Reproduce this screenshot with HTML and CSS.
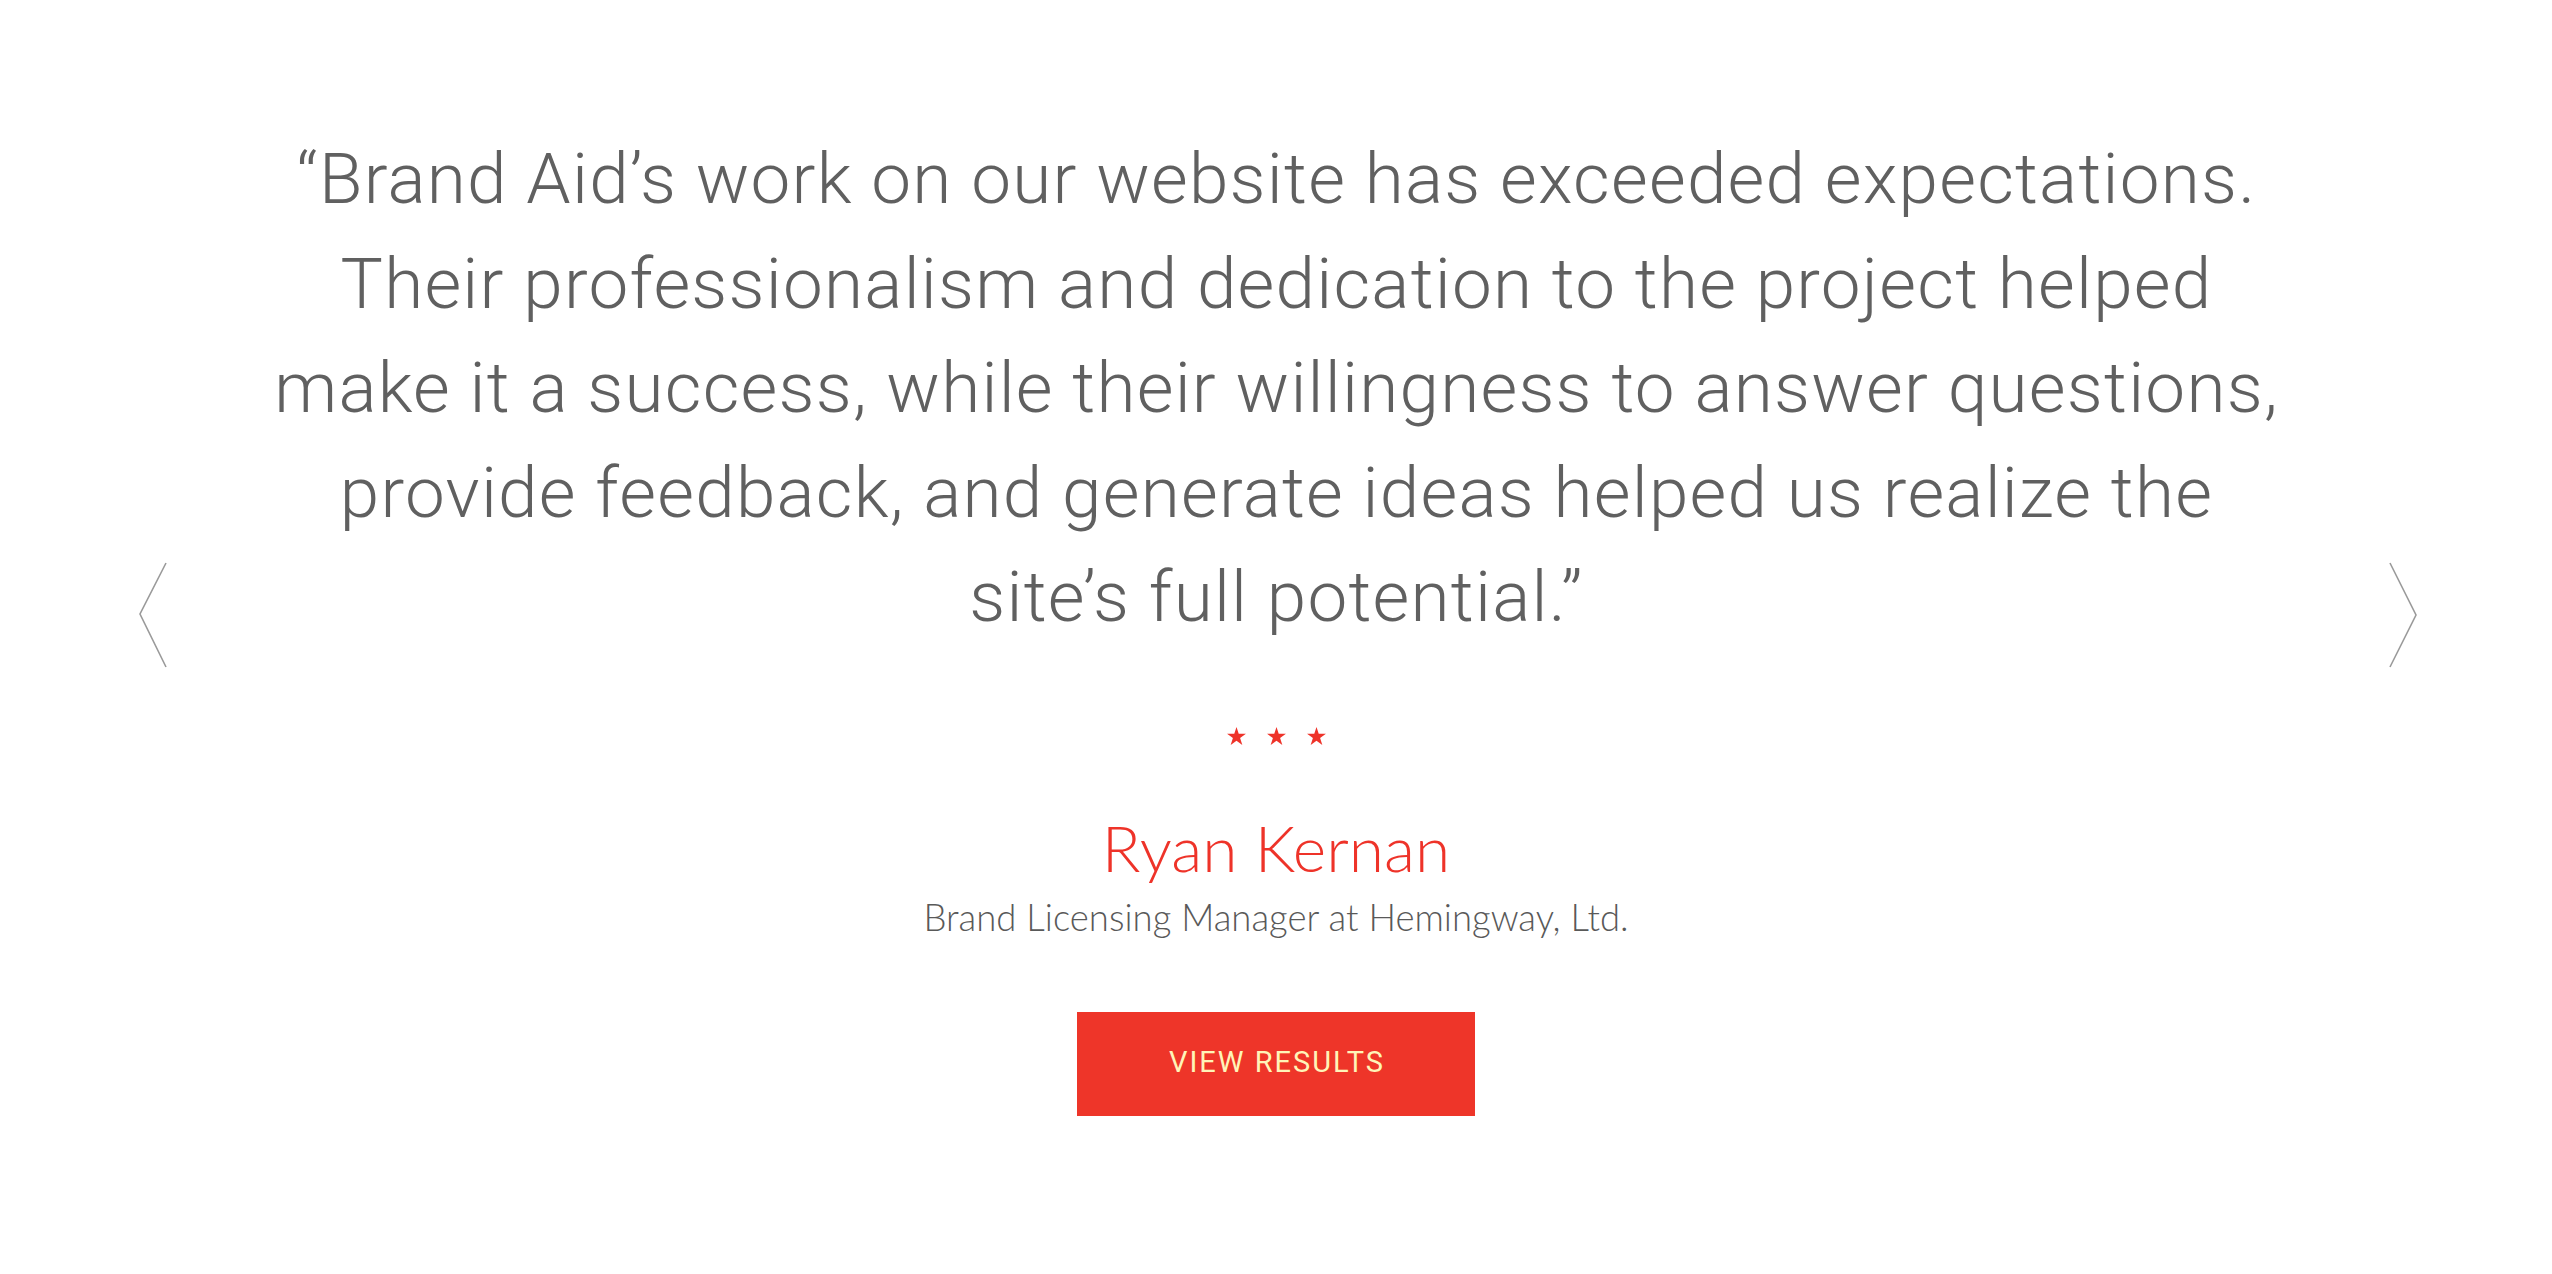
FILE: index.html
```html
<!DOCTYPE html>
<html lang="en">
<head>
<meta charset="utf-8">
<title>Testimonial</title>
<link rel="stylesheet" href="styles.css">
</head>
<body>
<section class="testimonial">
  <button class="nav nav-prev" aria-label="Previous">
    <svg width="30" height="106" viewBox="0 0 30 106"><polyline points="27,1 1,52 27,105" fill="none" stroke="#9a9a9a" stroke-width="1.6"/></svg>
  </button>
  <button class="nav nav-next" aria-label="Next">
    <svg width="30" height="106" viewBox="0 0 30 106"><polyline points="1,1 27,53 1,105" fill="none" stroke="#9a9a9a" stroke-width="1.6"/></svg>
  </button>
  <blockquote class="quote">“Brand Aid’s work on our website has exceeded expectations.<br>Their professionalism and dedication to the project helped<br>make it a success, while their willingness to answer questions,<br>provide feedback, and generate ideas helped us realize the<br>site’s full potential.”</blockquote>
  <div class="stars">
    <svg class="star" viewBox="0 0 20 19"><polygon points="10,0 12.35,7.24 19.96,7.24 13.8,11.71 16.15,18.94 10,14.47 3.85,18.94 6.2,11.71 0.04,7.24 7.65,7.24"/></svg>
    <svg class="star" viewBox="0 0 20 19"><polygon points="10,0 12.35,7.24 19.96,7.24 13.8,11.71 16.15,18.94 10,14.47 3.85,18.94 6.2,11.71 0.04,7.24 7.65,7.24"/></svg>
    <svg class="star" viewBox="0 0 20 19"><polygon points="10,0 12.35,7.24 19.96,7.24 13.8,11.71 16.15,18.94 10,14.47 3.85,18.94 6.2,11.71 0.04,7.24 7.65,7.24"/></svg>
  </div>
  <div class="name">Ryan Kernan</div>
  <div class="role">Brand Licensing Manager at Hemingway, Ltd.</div>
  <a class="button" href="#">VIEW RESULTS</a>
</section>
</body>
</html>
```

FILE: styles.css
```css
html, body {
  margin: 0;
  padding: 0;
  background: #ffffff;
}

.testimonial {
  position: relative;
  height: 1274px;
  box-sizing: border-box;
  padding-top: 127px;
  display: flex;
  flex-direction: column;
  align-items: center;
  text-align: center;
}

.nav {
  position: absolute;
  top: 562px;
  padding: 0;
  margin: 0;
  border: 0;
  background: none;
  cursor: pointer;
  line-height: 0;
}

.nav svg {
  display: block;
}

.nav-prev {
  left: 139px;
}

.nav-next {
  left: 2389px;
}

.quote {
  margin: 0;
  padding: 0 0 0 1px;
  font-family: "Roboto", "Open Sans", sans-serif;
  font-weight: 300;
  font-size: 71px;
  line-height: 104.5px;
  letter-spacing: 1.25px;
  color: #606060;
}

.stars {
  display: flex;
  gap: 21px;
  margin-top: 77px;
  height: 18px;
}

.star {
  width: 19px;
  height: 18px;
  fill: #ee3329;
}

.name {
  margin-top: 65px;
  font-family: "Lato", "Open Sans", sans-serif;
  font-weight: 300;
  font-size: 64px;
  line-height: 1.2;
  color: #ee3329;
}

.role {
  margin-top: 10px;
  font-family: "Lato", "Open Sans", sans-serif;
  font-weight: 300;
  font-size: 36.5px;
  line-height: 1.2;
  color: #595959;
}

.button {
  margin-top: 72px;
  width: 398px;
  height: 104px;
  box-sizing: border-box;
  padding: 0 0 4px 2px;
  display: flex;
  align-items: center;
  justify-content: center;
  background: #ee3529;
  color: #fff4b8;
  text-decoration: none;
  font-family: "Roboto", "Open Sans", sans-serif;
  font-weight: 400;
  font-size: 29px;
  letter-spacing: 2px;
}
```
